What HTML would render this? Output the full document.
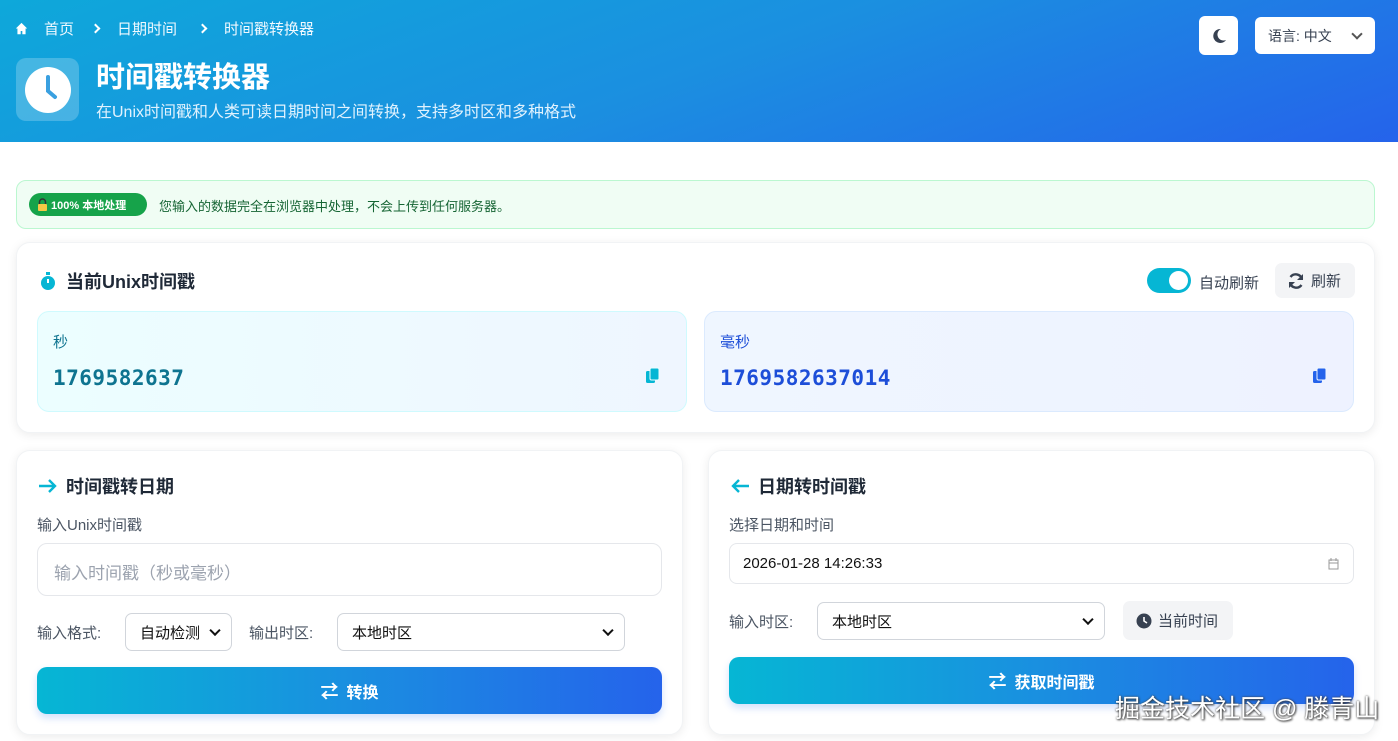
<!DOCTYPE html>
<html><head><meta charset="utf-8"><style>
*{box-sizing:border-box;margin:0;padding:0}
body{width:1398px;height:741px;overflow:hidden;background:#fff;font-family:"Liberation Sans","Noto Sans CJK SC",sans-serif;color:#1f2937;position:relative}
.hdr{position:absolute;left:0;top:0;width:1398px;height:142px;background:linear-gradient(160deg,#0ea8da 0%,#1b8fe0 50%,#2563eb 100%);color:#fff}
.abs{position:absolute}
.bc{left:15px;top:18px;font-size:15px;display:flex;align-items:center;height:20px;color:#f0f9ff}
.card{position:absolute;background:#fff;border-radius:14px;box-shadow:0 2px 10px rgba(0,0,0,.08);border:1px solid #f1f3f5}
.h3{position:absolute;font-size:18px;font-weight:bold;display:flex;align-items:center;gap:8px;color:#1f2937}
.lbl{position:absolute;font-size:15px;color:#4b5563}
.sel{position:absolute;border:1px solid #d1d5db;border-radius:7px;background:#fff;font-size:15px;color:#111;display:flex;align-items:center;padding-left:14px}
.sel:after{content:"";position:absolute;right:12px;top:50%;width:6px;height:6px;border-right:2px solid #111;border-bottom:2px solid #111;transform:translateY(-70%) rotate(45deg)}
.btn{position:absolute;border-radius:10px;background:linear-gradient(90deg,#06b6d4,#1a8fe0 50%,#2563eb);color:#fff;font-size:16px;font-weight:bold;display:flex;align-items:center;justify-content:center;gap:8px;box-shadow:0 4px 8px rgba(37,99,235,.2)}
.chev{display:inline-block;width:7px;height:7px;border-right:2px solid #fff;border-top:2px solid #fff;transform:rotate(45deg)}
</style></head><body>
<div class="hdr">
 <div class="abs bc"><svg width="13" height="13" viewBox="0 0 16 16"><path d="M8 1L1 8h2v7h4v-4h2v4h4V8h2z" fill="#fff"/></svg><span style="margin-left:16px">首页</span><span class="chev" style="margin:0 18px 0 18px"></span><span>日期时间</span><span class="chev" style="margin:0 18px 0 22px"></span><span>时间戳转换器</span></div>
 <div class="abs" style="left:16px;top:58px;width:63px;height:63px;border-radius:10px;background:rgba(255,255,255,.22)"><svg width="63" height="63" viewBox="0 0 63 63"><circle cx="32" cy="32" r="23" fill="#fff"/><path d="M32 19v14l7 6" stroke="#3aa0e0" stroke-width="4" fill="none" stroke-linecap="round"/></svg></div>
 <div class="abs" style="left:96px;top:54px;font-size:29px;font-weight:bold">时间戳转换器</div>
 <div class="abs" style="left:96px;top:98px;font-size:16px;color:#e0f2fe">在Unix时间戳和人类可读日期时间之间转换，支持多时区和多种格式</div>
 <div class="abs" style="left:1199px;top:16px;width:39px;height:39px;background:#fff;border-radius:6px;display:flex;align-items:center;justify-content:center"><svg width="16" height="16" viewBox="0 0 16 16"><path d="M10 1a7 7 0 1 0 5 11A6 6 0 0 1 10 1z" fill="#374151"/></svg></div>
 <div class="abs" style="left:1255px;top:17px;width:120px;height:37px;background:#fff;border-radius:6px;color:#374151;font-size:14px;padding:9px 0 0 13px">语言: 中文<span style="position:absolute;right:14px;top:13px;width:8px;height:8px;border-right:2px solid #555;border-bottom:2px solid #555;transform:rotate(45deg)"></span></div>
</div>
<div class="abs" style="left:16px;top:180px;width:1359px;height:49px;background:#f0fdf4;border:1px solid #bbf7d0;border-radius:10px"></div>
<div class="abs" style="left:29px;top:193px;width:118px;height:23px;background:#16a34a;border-radius:12px;color:#fff;font-size:11px;font-weight:bold;display:flex;align-items:center;padding-left:8px;gap:3px"><svg width="11" height="13" viewBox="0 0 11 13"><path d="M2.5 6V4a3 3 0 0 1 6 0v2" stroke="#333" stroke-width="1.5" fill="none"/><rect x="1" y="6" width="9" height="7" rx="1" fill="#f6c945"/></svg>100% 本地处理</div>
<div class="abs" style="left:159px;top:196px;font-size:13px;color:#166534">您输入的数据完全在浏览器中处理，不会上传到任何服务器。</div>

<div class="card" style="left:16px;top:242px;width:1359px;height:191px"></div>
<div class="h3" style="left:38px;top:268px"><svg width="20" height="20" viewBox="0 0 20 20"><rect x="8" y="1" width="4" height="3" fill="#06b6d4"/><circle cx="10" cy="12" r="7" fill="#06b6d4"/><path d="M10 12V8" stroke="#fff" stroke-width="2"/></svg>当前Unix时间戳</div>
<div class="abs" style="left:1147px;top:268px;width:44px;height:25px;background:#06b6d4;border-radius:13px"><div style="position:absolute;right:3px;top:3px;width:19px;height:19px;background:#fff;border-radius:50%"></div></div>
<div class="abs" style="left:1199px;top:272px;font-size:15px;color:#374151">自动刷新</div>
<div class="abs" style="left:1275px;top:263px;width:80px;height:35px;background:#f3f4f6;border-radius:7px;font-size:15px;color:#374151;display:flex;align-items:center;padding-left:12px;gap:6px"><svg width="18" height="18" viewBox="0 0 18 18"><path d="M15 7A6.5 6.5 0 0 0 3.5 5M3 11a6.5 6.5 0 0 0 11.5 2" stroke="#374151" stroke-width="2.4" fill="none"/><path d="M16 2v6h-6zM2 16v-6h6z" fill="#374151"/></svg>刷新</div>
<div class="abs" style="left:37px;top:311px;width:650px;height:101px;background:linear-gradient(90deg,#ecfeff,#eff6ff);border:1px solid #cffafe;border-radius:12px"></div>
<div class="abs" style="left:53px;top:331px;font-size:15px;color:#0e7490">秒</div>
<div class="abs" style="left:53px;top:366px;font-size:21px;font-weight:bold;font-family:'DejaVu Sans Mono','Liberation Mono',monospace;color:#0e7490;letter-spacing:0.5px">1769582637</div>
<svg class="abs" style="left:645px;top:367px" width="16" height="17" viewBox="0 0 16 17"><rect x="1" y="4" width="9" height="12" rx="1.5" fill="#06b6d4"/><rect x="5" y="1" width="9" height="12" rx="1.5" fill="#06b6d4" stroke="#ecfeff"/></svg>
<div class="abs" style="left:704px;top:311px;width:650px;height:101px;background:linear-gradient(90deg,#eff6ff,#eef2ff);border:1px solid #dbeafe;border-radius:12px"></div>
<div class="abs" style="left:720px;top:331px;font-size:15px;color:#1d4ed8">毫秒</div>
<div class="abs" style="left:720px;top:366px;font-size:21px;font-weight:bold;font-family:'DejaVu Sans Mono','Liberation Mono',monospace;color:#1d4ed8;letter-spacing:0.5px">1769582637014</div>
<svg class="abs" style="left:1312px;top:367px" width="16" height="17" viewBox="0 0 16 17"><rect x="1" y="4" width="9" height="12" rx="1.5" fill="#2563eb"/><rect x="5" y="1" width="9" height="12" rx="1.5" fill="#2563eb" stroke="#eff6ff"/></svg>

<div class="card" style="left:16px;top:450px;width:667px;height:285px"></div>
<div class="h3" style="left:38px;top:473px"><svg width="20" height="16" viewBox="0 0 20 16"><path d="M1 8h16M11 2l6 6-6 6" stroke="#06b6d4" stroke-width="2.4" fill="none"/></svg>时间戳转日期</div>
<div class="lbl" style="left:37px;top:514px">输入Unix时间戳</div>
<div class="abs" style="left:37px;top:543px;width:625px;height:53px;border:1px solid #e5e7eb;border-radius:10px;font-size:17px;color:#9ca3af;padding:15px 0 0 16px">输入时间戳（秒或毫秒）</div>
<div class="lbl" style="left:37px;top:622px">输入格式:</div>
<div class="sel" style="left:125px;top:613px;width:107px;height:38px">自动检测</div>
<div class="lbl" style="left:249px;top:622px">输出时区:</div>
<div class="sel" style="left:337px;top:613px;width:288px;height:38px">本地时区</div>
<div class="btn" style="left:37px;top:667px;width:625px;height:47px"><span style="font-size:18px">⇄</span>转换</div>

<div class="card" style="left:708px;top:450px;width:667px;height:285px"></div>
<div class="h3" style="left:730px;top:473px"><svg width="20" height="16" viewBox="0 0 20 16"><path d="M19 8H3M9 2L3 8l6 6" stroke="#06b6d4" stroke-width="2.4" fill="none"/></svg>日期转时间戳</div>
<div class="lbl" style="left:729px;top:514px">选择日期和时间</div>
<div class="abs" style="left:729px;top:543px;width:625px;height:41px;border:1px solid #e5e7eb;border-radius:8px;font-size:15px;color:#111;padding:11px 0 0 13px">2026-01-28 14:26:33<svg style="position:absolute;right:14px;top:14px" width="11" height="12" viewBox="0 0 11 12"><rect x="1" y="2" width="9" height="9" fill="none" stroke="#999"/><path d="M1 5h9M3 0v3M8 0v3" stroke="#999"/></svg></div>
<div class="lbl" style="left:729px;top:611px">输入时区:</div>
<div class="sel" style="left:817px;top:602px;width:288px;height:38px">本地时区</div>
<div class="abs" style="left:1123px;top:601px;width:110px;height:39px;background:#f3f4f6;border-radius:7px;font-size:15px;color:#374151;display:flex;align-items:center;padding-left:13px;gap:6px"><svg width="16" height="16" viewBox="0 0 16 16"><circle cx="8" cy="8" r="7.5" fill="#374151"/><path d="M8 4v4l3 2" stroke="#fff" stroke-width="1.6" fill="none"/></svg>当前时间</div>
<div class="btn" style="left:729px;top:657px;width:625px;height:47px"><span style="font-size:18px">⇄</span>获取时间戳</div>
<div class="abs" style="left:1115px;top:689px;font-size:25px;color:#fff;text-shadow:0 0 2px #444,1px 1px 2px #333">掘金技术社区 @ 滕青山</div>
</body></html>
